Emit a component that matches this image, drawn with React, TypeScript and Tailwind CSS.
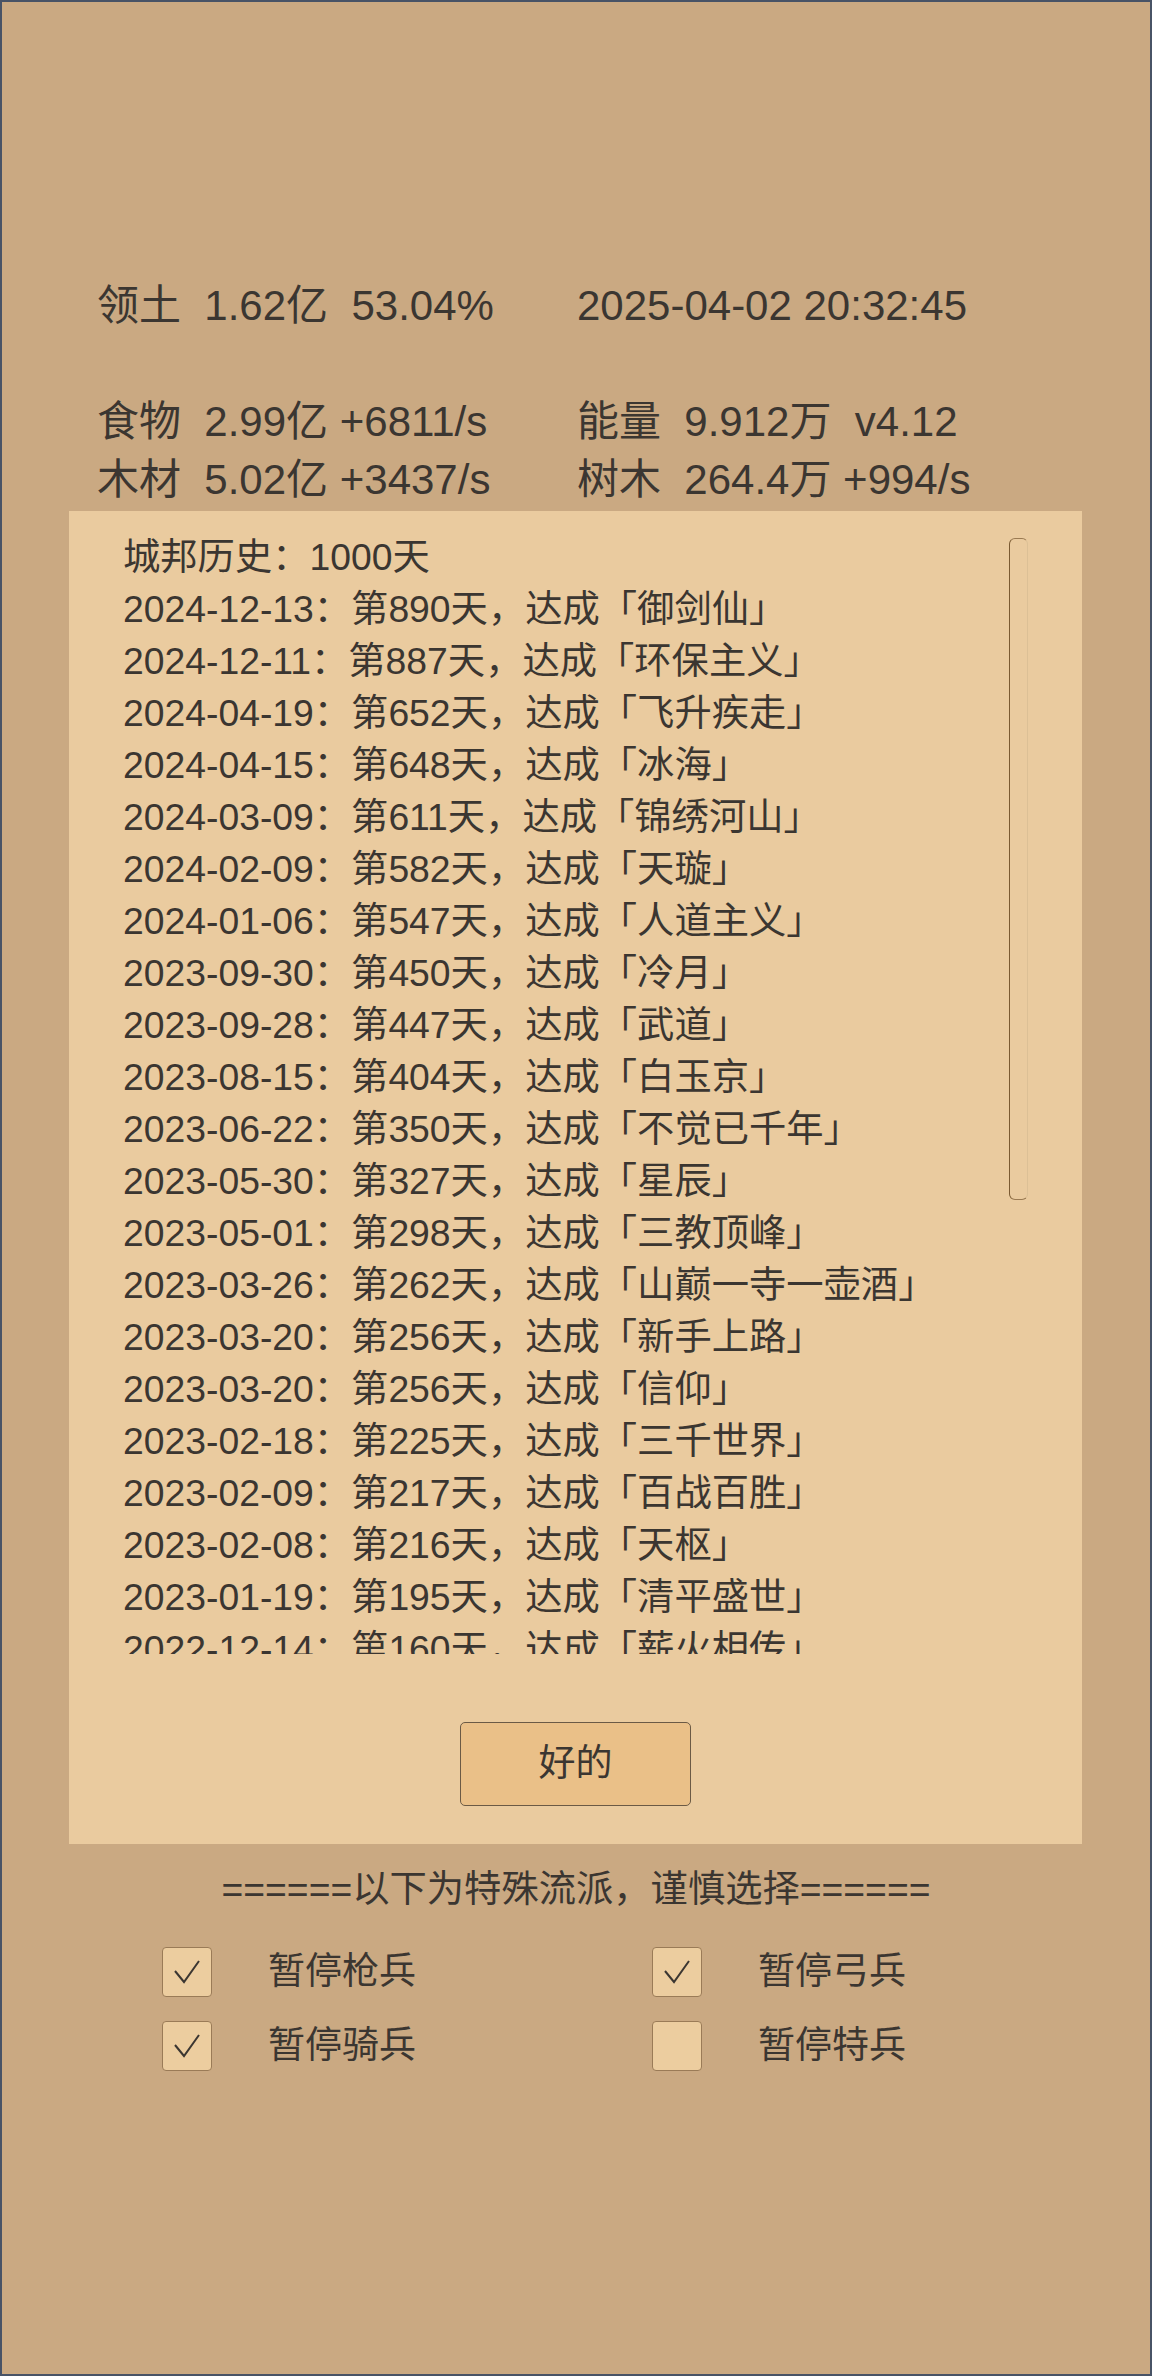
import React from "react";

const stats: [string, string][] = [
  ["领土  1.62亿  53.04%", "2025-04-02 20:32:45"],
  ["", ""],
  ["食物  2.99亿 +6811/s", "能量  9.912万  v4.12"],
  ["木材  5.02亿 +3437/s", "树木  264.4万 +994/s"],
];

const history: string[] = [
  "城邦历史：1000天",
  "2024-12-13：第890天，达成「御剑仙」",
  "2024-12-11：第887天，达成「环保主义」",
  "2024-04-19：第652天，达成「飞升疾走」",
  "2024-04-15：第648天，达成「冰海」",
  "2024-03-09：第611天，达成「锦绣河山」",
  "2024-02-09：第582天，达成「天璇」",
  "2024-01-06：第547天，达成「人道主义」",
  "2023-09-30：第450天，达成「冷月」",
  "2023-09-28：第447天，达成「武道」",
  "2023-08-15：第404天，达成「白玉京」",
  "2023-06-22：第350天，达成「不觉已千年」",
  "2023-05-30：第327天，达成「星辰」",
  "2023-05-01：第298天，达成「三教顶峰」",
  "2023-03-26：第262天，达成「山巅一寺一壶酒」",
  "2023-03-20：第256天，达成「新手上路」",
  "2023-03-20：第256天，达成「信仰」",
  "2023-02-18：第225天，达成「三千世界」",
  "2023-02-09：第217天，达成「百战百胜」",
  "2023-02-08：第216天，达成「天枢」",
  "2023-01-19：第195天，达成「清平盛世」",
  "2022-12-14：第160天，达成「薪火相传」",
  "2022-11-02：第118天，达成「初露锋芒」",
];

const options = [
  { label: "暂停枪兵", checked: true },
  { label: "暂停弓兵", checked: true },
  { label: "暂停骑兵", checked: true },
  { label: "暂停特兵", checked: false },
];

function CheckBox({ checked }: { checked: boolean }) {
  return (
    <div className="w-[50px] h-[50px] shrink-0 rounded-[4px] border border-[#9a7b57] bg-[#eccd9f] flex items-center justify-center">
      {checked && (
        <svg width="28" height="26" viewBox="0 0 28 26" fill="none">
          <path d="M2 12 L11 23 L26 2" stroke="#3b3631" strokeWidth="2" strokeLinejoin="miter" />
        </svg>
      )}
    </div>
  );
}

export default function App() {
  return (
    <div className="w-[1152px] h-[2376px] border-2 border-[#485366] bg-[#caa982] text-[#3b3631] font-['Liberation_Sans','Noto_Sans_CJK_SC',sans-serif]">
      {/* stats */}
      <div className="pt-[275px] pl-[95px] grid grid-cols-[480px_auto] text-[42px] leading-[58px] whitespace-pre">
        {stats.map(([a, b], i) => (
          <React.Fragment key={i}>
            <div className="h-[58px]">{a}</div>
            <div className="h-[58px]">{b}</div>
          </React.Fragment>
        ))}
      </div>

      {/* history dialog */}
      <div className="mt-[2px] ml-[67px] w-[1013px] bg-[#eacb9f] pt-[20px] pb-[38px] flex flex-col items-center">
        <div className="w-full flex">
          <div className="flex-1 h-[1123px] overflow-hidden pl-[54px] text-[37.3px] leading-[52px] whitespace-nowrap">
            {history.map((line, i) => (
              <div key={i}>{line}</div>
            ))}
          </div>
          <div className="mt-[7px] mr-[54px] w-[19px] h-[662px] rounded-[6px] border border-[#dcc096] border-l-[#7a5a32] border-t-[#9a7a52] border-b-[#9a7a52]" />
        </div>
        <button
          type="button"
          className="mt-[68px] w-[231px] h-[84px] rounded-[5px] border-[1.5px] border-[#6b5a45] bg-[#eac088] text-[37px] text-[#3b3631]"
        >
          好的
        </button>
      </div>

      {/* special options */}
      <div className="mt-[19px] text-center text-[37.3px] leading-[52px]">======以下为特殊流派，谨慎选择======</div>
      <div className="mt-[32px] pl-[160px] grid grid-cols-[490px_auto] gap-y-[24px] text-[37px]">
        {options.map((o) => (
          <div key={o.label} className="flex items-center">
            <CheckBox checked={o.checked} />
            <span className="ml-[56px] leading-[50px]">{o.label}</span>
          </div>
        ))}
      </div>
    </div>
  );
}
